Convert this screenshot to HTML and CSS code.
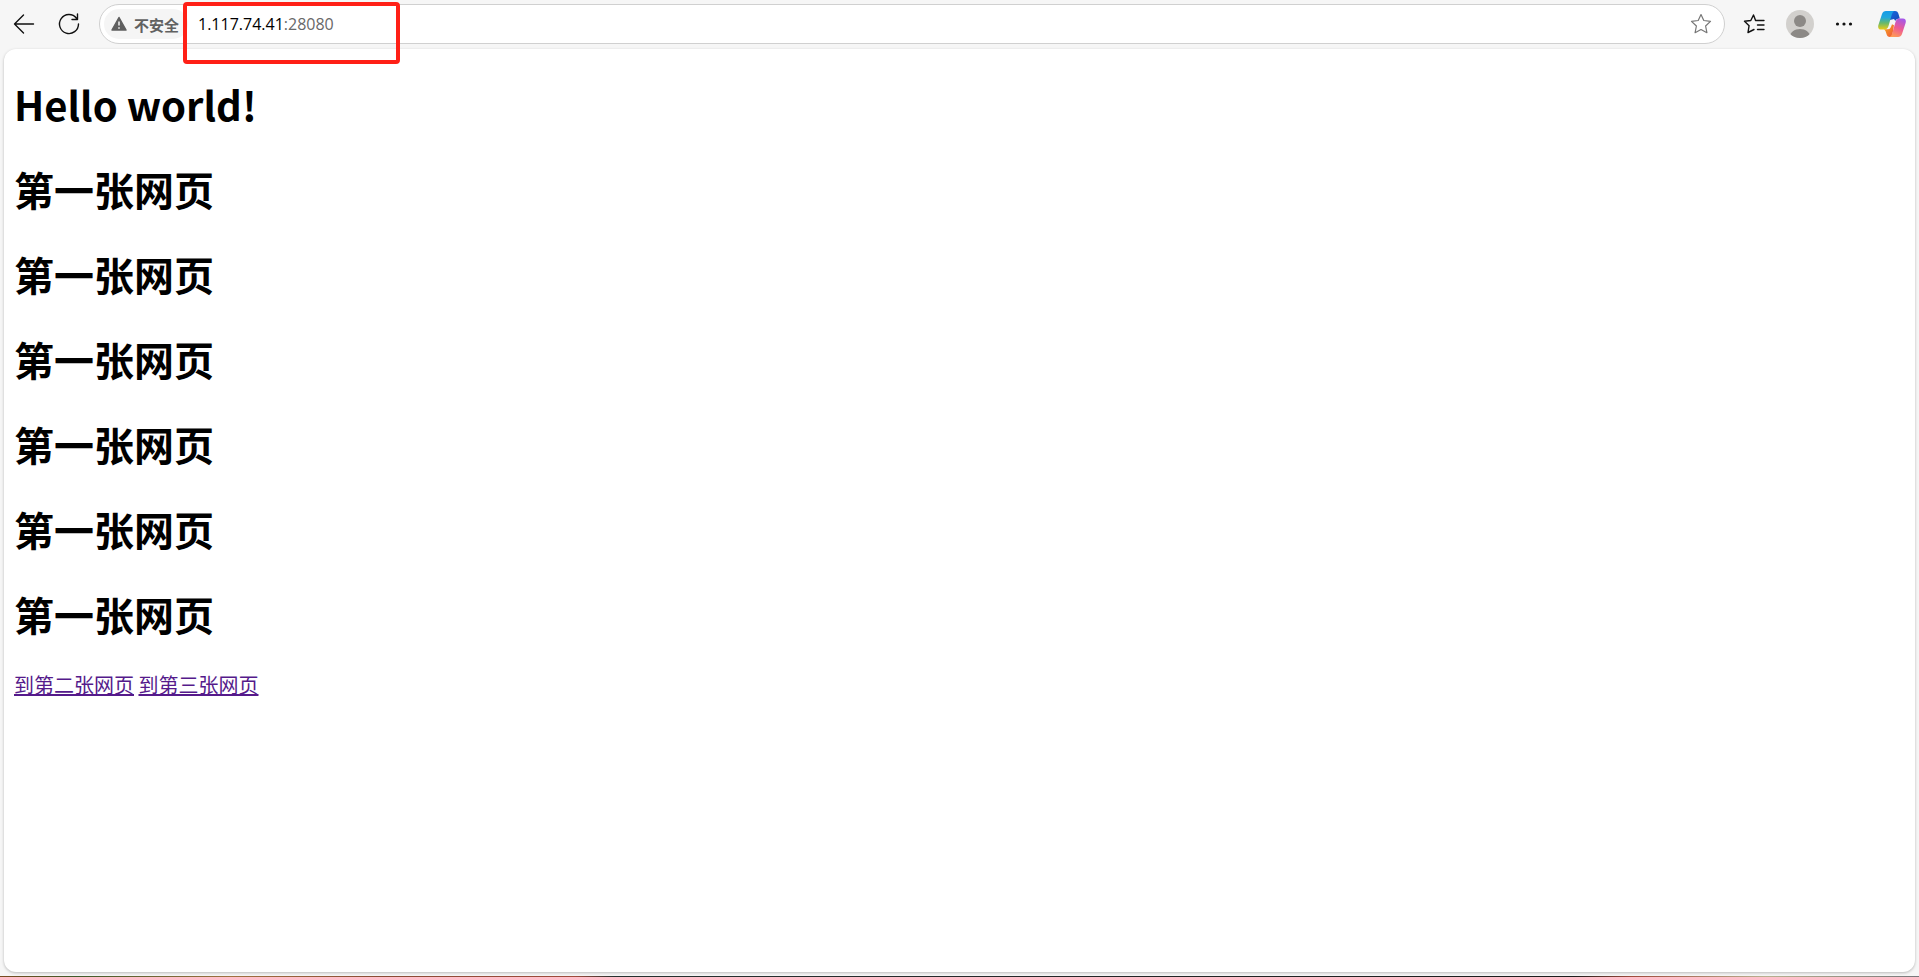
FILE: index.html
```html
<!DOCTYPE html>
<html lang="zh-CN">
<head>
<meta charset="utf-8">
<title>Hello world!</title>
<link rel="stylesheet" href="styles.css">
</head>
<body>
<header class="toolbar">
  <nav class="actions">
    <button class="icon-button" type="button" aria-label="返回">
      <svg width="24" height="24" viewBox="0 0 24 24" fill="none" stroke="#111" stroke-width="1.4" stroke-linecap="round" stroke-linejoin="round"><path d="M21.500 12H2.500M11.500 3 2.500 12l9 9"/></svg>
    </button>
    <button class="icon-button" type="button" aria-label="刷新">
      <svg width="24" height="24" viewBox="0 0 24 24" fill="none" stroke="#111" stroke-width="1.4" stroke-linecap="round" stroke-linejoin="round"><path d="M21.500 12A9.500 9.500 0 1 1 19.500 6.200M20.500 2v5.500H15"/></svg>
    </button>
  </nav>
  <div class="address">
    <button class="security" type="button">
      <svg width="16" height="16" viewBox="0 0 16 16"><path d="M8 1.500 15 14H1Z" fill="#5f5f5f" stroke="#5f5f5f" stroke-width="1.500" stroke-linejoin="round"/><path d="M8 5.500v4M8 11.300v1.400" stroke="#f4f4f4" stroke-width="1.500"/></svg>
      <span>不安全</span>
    </button>
    <a class="url" href="#">1.117.74.41<span class="port">:28080</span></a>
    <button class="icon-button" type="button" aria-label="收藏">
      <svg width="22" height="22" viewBox="0 0 22 22" fill="none" stroke="#777" stroke-width="1.2" stroke-linejoin="round"><path d="m11 1.500 2.800 6 6.700.9-4.900 4.600 1.300 6.700-5.900-3.200-5.900 3.200 1.300-6.700L1.500 8.400l6.700-.9Z"/></svg>
    </button>
    <div class="highlight"></div>
  </div>
  <nav class="actions">
    <button class="icon-button" type="button" aria-label="收藏夹">
      <svg width="22" height="22" viewBox="0 0 22 22" fill="none" stroke="#111" stroke-width="1.4" stroke-linecap="round" stroke-linejoin="round"><path d="M14 7.500 12.500 7.300 10.500 2 7.800 7.500 1.500 8.300l4.600 4.400L5 19.500l6-3M12.500 7.500H21M14.500 12H21M14.500 16.500H21"/></svg>
    </button>
    <button class="icon-button" type="button" aria-label="个人资料">
      <svg width="28" height="28" viewBox="0 0 28 28"><defs><clipPath id="avatar"><circle cx="14" cy="14" r="14"/></clipPath></defs><g clip-path="url(#avatar)"><path fill="#d2d0cd" d="M0 0h28v28H0z"/><circle cx="14" cy="11" r="6" fill="#8c8986"/><path d="M3.500 28c.5-6 5-9 10.500-9s10 3 10.500 9Z" fill="#8c8986"/></g></svg>
    </button>
    <button class="icon-button" type="button" aria-label="更多">
      <svg width="18" height="18" viewBox="0 0 18 18" fill="#111"><circle cx="2.500" cy="9" r="1.600"/><circle cx="9" cy="9" r="1.600"/><circle cx="15.500" cy="9" r="1.600"/></svg>
    </button>
    <button class="icon-button copilot" type="button" aria-label="Copilot">
      <svg width="28" height="28" viewBox="0 0 28 28">
        <defs>
          <linearGradient id="left" x1="0" y1="0" x2="0" y2="1"><stop offset="0" stop-color="#159be8"/><stop offset=".35" stop-color="#21a8dc"/><stop offset=".65" stop-color="#67b96c"/><stop offset="1" stop-color="#eccb16"/></linearGradient>
          <linearGradient id="right" x1=".7" y1="0" x2=".3" y2="1"><stop offset="0" stop-color="#a657e8"/><stop offset=".5" stop-color="#ed5a95"/><stop offset="1" stop-color="#ff9b55"/></linearGradient>
          <linearGradient id="fold" x1="0" y1="0" x2="1" y2="1"><stop offset="0" stop-color="#176be0"/><stop offset="1" stop-color="#1745b5"/></linearGradient>
          <linearGradient id="tail" x1="0" y1="0" x2="1" y2="1"><stop offset="0" stop-color="#f6b01d"/><stop offset="1" stop-color="#f0513c"/></linearGradient>
        </defs>
        <path fill="url(#fold)" d="M12 1h5c2 0 3 1 3.500 3l1.300 4.500C19 8.500 18 9.500 17.300 11L16 9l-4 1Z"/>
        <path fill="url(#tail)" d="M6 19.300h4c2 0 3-2 4-5l2 1-1.500 9c-.4 2-.8 2.700-2.500 2.700-2 0-3-1-3.500-3L7.500 21Z"/>
        <path fill="url(#left)" d="M8 1h8.500c-1.500.5-2.200 2-2.700 3.500L10.500 16c-.7 2-1.800 3.500-4 3.500H3C.5 19.500-.3 17.500.4 15L4 4c.7-2 2-3 4-3Z"/>
        <path fill="url(#right)" d="M20 27h-8.500c1.500-.5 2.200-2 2.700-3.500L17.500 12c.7-2 1.800-3.500 4-3.500H25c2.500 0 3.300 2 2.600 4.500L24 24c-.7 2-2 3-4 3Z"/>
      </svg>
    </button>
  </nav>
</header>
<main class="page">
  <h1>Hello world!</h1>
  <h1>第一张网页</h1>
  <h1>第一张网页</h1>
  <h1>第一张网页</h1>
  <h1>第一张网页</h1>
  <h1>第一张网页</h1>
  <h1>第一张网页</h1>
  <a href="#second">到第二张网页</a>
  <a href="#third">到第三张网页</a>
</main>
<footer class="desktop-edge"></footer>
</body>
</html>
```
FILE: styles.css
```css
* { box-sizing: border-box; }

body {
  display: flex;
  flex-direction: column;
  min-height: 100vh;
  margin: 0;
  background: #f6f6f6;
  font-family: "Noto Sans CJK SC", sans-serif;
  color: #000;
}

button {
  padding: 0;
  border: 0;
  background: none;
  font: inherit;
}

svg { display: block; }

.toolbar {
  display: flex;
  align-items: center;
  gap: 18px;
  height: 48px;
  padding: 0 13px 0 12px;
}

.icon-button { flex: none; }

.address {
  position: relative;
  display: flex;
  flex: 1;
  align-items: center;
  height: 40px;
  padding: 0 12px 0 4px;
  border: 1px solid #d0d0d0;
  border-radius: 20px;
  background: #fff;
}

.security {
  display: flex;
  align-items: center;
  gap: 7px;
  height: 30px;
  padding: 0 9px 0 7px;
  border-radius: 15px;
  background: #f5f5f5;
  color: #616161;
  font-size: 15px;
  font-weight: 700;
}

.url {
  flex: 1;
  margin-left: 10px;
  color: #000;
  font-family: "Open Sans", "Noto Sans", sans-serif;
  font-size: 16px;
  text-decoration: none;
}

.port { color: #686868; }

.highlight {
  position: absolute;
  top: -3px;
  left: 83px;
  width: 217px;
  height: 62px;
  border: 4px solid #ff2016;
  border-radius: 4px;
  pointer-events: none;
}

.actions {
  display: flex;
  align-items: center;
  gap: 21px;
}

.copilot { margin-left: 4px; }

.page {
  flex: 1;
  margin: 1px 4px 4px;
  padding: 0 10px;
  border-radius: 12px;
  background: #fff;
  box-shadow: 0 1px 3px rgba(0, 0, 0, 0.25);
  font-size: 20px;
  line-height: 29px;
}

h1 {
  margin: 26px 0 27px;
  font-size: 40px;
  line-height: 58px;
}

.page a { color: #551a8b; }

.desktop-edge {
  height: 1px;
  background: linear-gradient(to right, #7a4a20, #3f5a2a 4%, #a07040 12%, #8a4a34 20%, #a04a3c 30%, #25302f 32%, #25282a 50%, #1c1c1c 82%, #a04a3c 85%, #b8b090 92%, #77777b);
}
```
